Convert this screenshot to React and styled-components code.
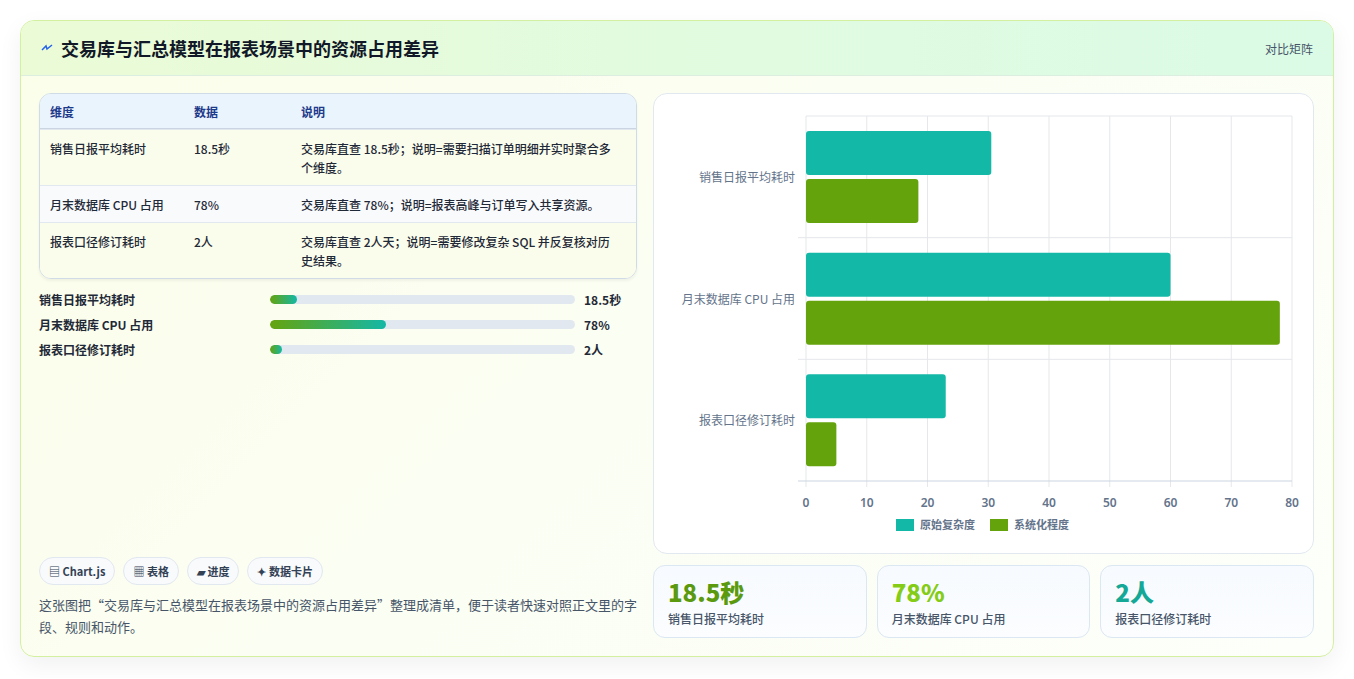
import React from "react";
import styled, { createGlobalStyle } from "styled-components";

const Global = createGlobalStyle`
  html,body{margin:0;padding:0;background:#fff;}
  body{font-family:"Noto Sans CJK SC","Noto Sans",sans-serif;color:#1f2937;}
`;
const Page = styled.div`padding:20px 20px 21px 20px;`;
const Card = styled.div`
  height:637px;box-sizing:border-box;border:1px solid #d3f0a0;border-radius:14px;
  background:linear-gradient(135deg,#fbfee9 0%,#fbfef3 50%,#fdfffa 100%);
  box-shadow:0 8px 24px rgba(0,0,0,0.06);overflow:hidden;display:flex;flex-direction:column;
`;
const Header = styled.div`
  height:55px;flex:none;box-sizing:border-box;display:flex;align-items:center;justify-content:space-between;
  padding:0 20px;border-bottom:1px solid #dbeee0;
  background:linear-gradient(90deg,#ebfbd6 0%,#e1fbdf 50%,#dbfbe6 100%);
`;
const Title = styled.h1`margin:0;font-size:18px;font-weight:700;color:#111827;display:flex;align-items:center;gap:8px;`;
const Tag = styled.span`font-size:12px;color:#475569;`;
const Body = styled.div`flex:1;display:grid;grid-template-columns:598px 661px;gap:16px;padding:17px 19px 18px 18px;`;
const Left = styled.div`display:flex;flex-direction:column;`;
const Right = styled.div`display:flex;flex-direction:column;gap:11px;`;
const Table = styled.div`border:1px solid #cfdbe6;border-radius:12px;overflow:hidden;box-shadow:0 2px 3px rgba(0,0,0,0.05);`;
const Row = styled.div`
  display:grid;grid-template-columns:144px 107px 1fr;padding:${p=>p.$head?"8px 10px 7px":"9px 10px 8px"};
  font-size:12px;line-height:19px;color:${p=>p.$head?"#1e3a8a":"#1f2937"};font-weight:${p=>p.$head?700:500};
  background:${p=>p.$head?"#eaf4fd":p.$alt?"#f8fafc":"#fafdec"};
  border-top:${p=>p.$head?"none":"1px solid #e2e8f0"};
  ${p=>p.$head&&"border-bottom:1px solid #cbd5e1;"}
`;
const Cell = styled.div`padding-right:8px;`;
const Bars = styled.div`display:flex;flex-direction:column;gap:7px;margin-top:11px;`;
const BarRow = styled.div`display:grid;grid-template-columns:222px 305px auto;gap:0 9px;align-items:center;font-size:12px;font-weight:600;height:18px;`;
const Track = styled.div`height:9px;border-radius:5px;background:#e2e8f0;overflow:hidden;`;
const Fill = styled.div`height:100%;border-radius:5px;background:linear-gradient(90deg,#65a30d,#14b8a6);`;
const Chips = styled.div`margin-top:auto;display:flex;gap:8px;`;
const Chip = styled.span`font-size:11px;font-weight:600;color:#334155;border:1px solid #e2e8f0;background:#f8fafc;border-radius:14px;padding:5px 9px;`;
const Desc = styled.p`margin:9px 0 0;font-size:13px;line-height:22px;color:#475569;`;
const ChartCard = styled.div`height:461px;box-sizing:border-box;border:1px solid #e2e8f0;border-radius:14px;background:#fff;`;
const Stats = styled.div`display:grid;grid-template-columns:repeat(3,1fr);gap:10px;`;
const Stat = styled.div`height:73px;box-sizing:border-box;border:1px solid #dbe7f3;border-radius:12px;background:linear-gradient(180deg,#f7fafe,#fbfdff);padding:10px 14px;`;
const Big = styled.div`font-size:24px;font-weight:800;line-height:32px;color:${p=>p.$c};`;
const Small = styled.div`font-size:12px;font-weight:500;color:#475569;margin-top:2px;`;

const rows=[["销售日报平均耗时","18.5秒","交易库直查 18.5秒；说明=需要扫描订单明细并实时聚合多个维度。"],["月末数据库 CPU 占用","78%","交易库直查 78%；说明=报表高峰与订单写入共享资源。"],["报表口径修订耗时","2人","交易库直查 2人天；说明=需要修改复杂 SQL 并反复核对历史结果。"]];
const prog=[["销售日报平均耗时",9,"18.5秒"],["月末数据库 CPU 占用",38,"78%"],["报表口径修订耗时",4,"2人"]];

function Chart(){
  const x0=152,w=486,y0=22,h=365,u=w/80;
  const data=[["销售日报平均耗时",30.5,18.5],["月末数据库 CPU 占用",60,78],["报表口径修订耗时",23,5]];
  const band=h/3;
  return(<svg width="661" height="459" style={{display:"block"}}>
    {Array.from({length:9},(_,i)=><g key={i}>
      <line x1={x0+i*u*10} x2={x0+i*u*10} y1={y0} y2={y0+h+6} stroke="#e5e7eb"/>
      <text x={x0+i*u*10} y={y0+h+26} fontSize="12" fill="#64748b" fontWeight="600" textAnchor="middle" fontFamily="Noto Sans">{i*10}</text>
    </g>)}
    <line x1={x0} x2={x0+w} y1={y0} y2={y0} stroke="#e5e7eb"/>
    {[1,2].map(i=><line key={i} x1={x0-8} x2={x0+w} y1={y0+band*i} y2={y0+band*i} stroke="#e5e7eb"/>)}
    <line x1={x0-8} x2={x0+w} y1={y0+h} y2={y0+h} stroke="#cbd5e1"/>
    {data.map((d,i)=>{const top=y0+band*i;return <g key={i}>
      <rect x={x0} y={top+15} width={d[1]*u} height={44} rx="3" fill="#14b8a6"/>
      <rect x={x0} y={top+63} width={d[2]*u} height={44} rx="3" fill="#65a30d"/>
      <text x={x0-11} y={top+band/2+5} fontSize="12" fill="#64748b" textAnchor="end" fontFamily="Noto Sans CJK SC">{d[0]}</text>
    </g>})}
    <rect x="242" y="425" width="18" height="12" fill="#14b8a6"/>
    <text x="266" y="435" fontSize="11" fill="#64748b" fontWeight="600" fontFamily="Noto Sans CJK SC">原始复杂度</text>
    <rect x="336" y="425" width="18" height="12" fill="#65a30d"/>
    <text x="360" y="435" fontSize="11" fill="#64748b" fontWeight="600" fontFamily="Noto Sans CJK SC">系统化程度</text>
  </svg>);
}

export default function App(){
  return(<Page><Global/><Card>
    <Header><Title><svg width="12" height="10" viewBox="0 0 12 10"><path d="M1 7 L5 3 L6 6 L11 2" stroke="#2563eb" strokeWidth="1.5" fill="none"/></svg>交易库与汇总模型在报表场景中的资源占用差异</Title><Tag>对比矩阵</Tag></Header>
    <Body>
      <Left>
        <Table>
          <Row $head><Cell>维度</Cell><Cell>数据</Cell><Cell>说明</Cell></Row>
          {rows.map((r,i)=><Row key={i} $alt={i===1}>{r.map((c,j)=><Cell key={j}>{c}</Cell>)}</Row>)}
        </Table>
        <Bars>{prog.map((p,i)=><BarRow key={i}><span>{p[0]}</span><Track><Fill style={{width:p[1]+"%"}}/></Track><span>{p[2]}</span></BarRow>)}</Bars>
        <Chips><Chip>▤ Chart.js</Chip><Chip>▦ 表格</Chip><Chip>▰ 进度</Chip><Chip>✦ 数据卡片</Chip></Chips>
        <Desc>这张图把“交易库与汇总模型在报表场景中的资源占用差异”整理成清单，便于读者快速对照正文里的字段、规则和动作。</Desc>
      </Left>
      <Right>
        <ChartCard><Chart/></ChartCard>
        <Stats>
          <Stat><Big $c="#5b9a0e">18.5秒</Big><Small>销售日报平均耗时</Small></Stat>
          <Stat><Big $c="#84cc16">78%</Big><Small>月末数据库 CPU 占用</Small></Stat>
          <Stat><Big $c="#14a896">2人</Big><Small>报表口径修订耗时</Small></Stat>
        </Stats>
      </Right>
    </Body>
  </Card></Page>);
}
